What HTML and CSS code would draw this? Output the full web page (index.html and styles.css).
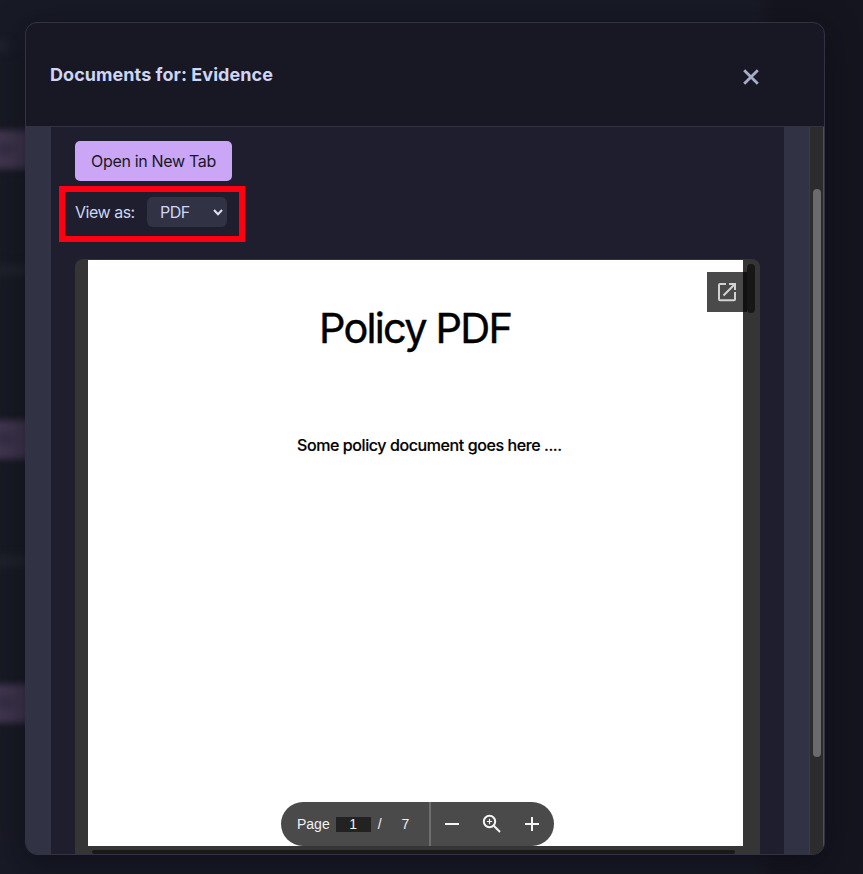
FILE: index.html
```html
<!DOCTYPE html>
<html lang="en">
<head>
<meta charset="utf-8">
<title>Documents for: Evidence</title>
<link rel="stylesheet" href="styles.css">
</head>
<body>
<div class="backdrop" aria-hidden="true">
  <span class="ghost ghost-a"></span>
  <span class="ghost ghost-b"></span>
  <span class="ghost ghost-c"></span>
  <span class="smudge smudge-a"></span>
  <span class="smudge smudge-b"></span>
  <span class="smudge smudge-c"></span>
</div>
<main class="modal">
  <header class="modal-header">
    <h1 class="modal-title">Documents for: Evidence</h1>
    <button class="close" aria-label="Close">
      <svg width="18" height="18" viewBox="0 0 18 18"><path d="M2.200 2.200 15.800 15.800M15.800 2.200 2.200 15.800"/></svg>
    </button>
  </header>
  <div class="modal-body">
    <section class="panel">
      <button class="open-tab">Open in New Tab</button>
      <div class="view-row">
        <span class="view-label">View as:</span>
        <span class="view-select">PDF
          <svg width="10" height="7" viewBox="0 0 10 7"><path d="M1 1 5 5.200 9 1"/></svg>
        </span>
      </div>
      <div class="viewer">
        <article class="page">
          <h2 class="page-title">Policy PDF</h2>
          <p class="page-text">Some policy document goes here ....</p>
        </article>
        <div class="popout">
          <svg width="20" height="20" viewBox="0 0 20 20"><path d="M9 2H3Q2 2 2 3V17.200Q2 18.200 3 18.200H17Q18 18.200 18 17.200V10M12 2H18V8M17.500 2.500 6.500 13.500"/></svg>
        </div>
        <span class="viewer-thumb"></span>
        <span class="viewer-hthumb"></span>
        <div class="toolbar">
          <div class="pager">
            <span class="pager-label">Page</span>
            <span class="pager-current">1</span>
            <span class="pager-slash">/</span>
            <span class="pager-total">7</span>
          </div>
          <div class="zoom">
            <svg width="16" height="16" viewBox="0 0 16 16"><path d="M1 8H15"/></svg>
            <svg width="20" height="20" viewBox="0 0 20 20"><circle cx="7.500" cy="7.500" r="5.700"/><path d="M11.800 11.800 18 18"/><path class="fine" d="M4.800 7.500H10.200M7.500 4.800V10.200"/></svg>
            <svg width="16" height="16" viewBox="0 0 16 16"><path d="M1 8H15M8 1V15"/></svg>
          </div>
        </div>
      </div>
    </section>
    <div class="scrollbar"><div class="scroll-thumb"></div></div>
  </div>
</main>
<div class="highlight"></div>
</body>
</html>
```

FILE: styles.css
```css
* { box-sizing: border-box; }
html, body { margin: 0; width: 100%; height: 100%; }
body {
  position: relative;
  overflow: hidden;
  padding: 22px 38px 19px 25px;
  background: linear-gradient(90deg, #181a25 0, #181a25 755px, #15151f 775px, #15151f 100%);
  font-family: Inter, "Liberation Sans", sans-serif;
  color: #cdd6f4;
}
button { font: inherit; border: 0; padding: 0; margin: 0; }
svg { display: block; fill: none; }

.backdrop { position: absolute; inset: 0; overflow: hidden; }
.ghost {
  position: absolute;
  left: -20px;
  width: 60px;
  height: 39px;
  background: radial-gradient(ellipse 16px 10px at 24px 19px, #302b40, #41364f);
  filter: blur(3px);
}
.ghost-a { top: 130px; }
.ghost-b { top: 420px; }
.ghost-c { top: 684px; }
.smudge {
  position: absolute;
  left: -6px;
  width: 40px;
  height: 10px;
  background: #21242d;
  filter: blur(4px);
}
.smudge-a { top: 41px; width: 15px; }
.smudge-b { top: 265px; }
.smudge-c { top: 556px; }

.modal {
  position: relative;
  display: flex;
  flex-direction: column;
  width: 800px;
  height: 833px;
  overflow: hidden;
  border: 1px solid #313244;
  border-radius: 12px;
  background: #181825;
  box-shadow: 0 8px 32px rgba(8, 10, 18, .6);
}
.modal-header {
  display: flex;
  justify-content: space-between;
  align-items: center;
  flex: none;
  height: 104px;
  padding: 0 64px 0 24px;
  border-bottom: 1px solid #313244;
}
.modal-title { margin: 0; font-size: 18px; line-height: 28px; font-weight: 700; letter-spacing: .06px; }
.close { margin-top: 5px; background: none; }
.close svg { stroke: #a6adc8; stroke-width: 2.8; }

.modal-body { display: flex; flex: 1; min-height: 0; background: #313244; }
.panel { width: 733px; margin-left: 25px; padding: 14px 24px 0; background: #1e1e2e; }
.open-tab {
  display: block;
  width: 157px;
  height: 40px;
  border-radius: 5px;
  background: #cba6f7;
  color: #181825;
  font-size: 16px;
  letter-spacing: -.32px;
}
.view-row {
  display: flex;
  align-items: center;
  gap: 12px;
  height: 30px;
  margin-top: 16px;
  font-size: 16px;
  letter-spacing: -.48px;
}
.view-label { width: 60px; white-space: nowrap; }
.view-select {
  display: flex;
  align-items: center;
  justify-content: space-between;
  width: 80px;
  height: 30px;
  padding: 0 4px 0 13px;
  border-radius: 6px;
  background: #313244;
}
.view-select svg { stroke: #dce2f7; stroke-width: 2; }

.viewer {
  position: relative;
  height: 640px;
  margin-top: 32px;
  padding: 1px 17px 0 13px;
  border-radius: 8px 8px 0 0;
  background: #353535;
  overflow: hidden;
}
.page { height: 586px; padding-top: 43px; background: #fff; color: #000; }
.page-title {
  margin: 0 0 0 231px;
  font-size: 41.5px;
  line-height: 50px;
  font-weight: 400;
  letter-spacing: -1.8px;
  -webkit-text-stroke: .4px #000;
}
.page-text {
  margin: 82px 0 0 209px;
  font-size: 16px;
  line-height: 20px;
  font-weight: 500;
  letter-spacing: -.41px;
  -webkit-text-stroke: .15px #000;
}
.popout {
  position: absolute;
  top: 13px;
  right: 13px;
  width: 40px;
  height: 40px;
  padding: 10px;
  background: linear-gradient(90deg, #4a4a4a 36px, #111 36px);
}
.popout svg { stroke: #d2d2d2; stroke-width: 2; }
.viewer-thumb { position: absolute; top: 5px; right: 5px; width: 8px; height: 49px; border-radius: 4px; background: #171717; }
.viewer-hthumb { position: absolute; top: 591px; left: 17px; width: 643px; height: 4px; border-radius: 3px; background: #191919; }

.toolbar {
  position: absolute;
  top: 543px;
  left: 206px;
  display: flex;
  width: 273px;
  height: 44px;
  overflow: hidden;
  border-radius: 22px;
  background: #4a4a4a;
  color: #f1f1f1;
  font-family: "Liberation Sans", sans-serif;
  font-size: 14px;
}
.pager { display: flex; align-items: center; width: 150px; padding-left: 16px; border-right: 2px solid #6e6e6e; }
.pager-current { width: 35px; height: 15px; margin-left: 6px; background: #222; line-height: 15px; text-align: center; }
.pager-slash { margin-left: 7px; }
.pager-total { margin-left: 20px; }
.zoom { display: flex; flex: 1; align-items: center; justify-content: space-between; padding: 0 14px 0 13px; }
.zoom svg { stroke: #f5f5f5; stroke-width: 2; }
.zoom .fine { stroke-width: 1.2; }

.scrollbar {
  width: 15px;
  margin-left: auto;
  padding: 62px 2px 0 3px;
  background: #2c2c2c;
  border-left: 1px solid #3c3c41;
  border-right: 1px solid #505054;
}
.scroll-thumb { width: 8px; height: 568px; border-radius: 4px; background: #6b6b6b; }

.highlight {
  position: absolute;
  left: 59px;
  top: 186px;
  width: 186px;
  height: 56px;
  border: 6px solid #ff0013;
}
```
